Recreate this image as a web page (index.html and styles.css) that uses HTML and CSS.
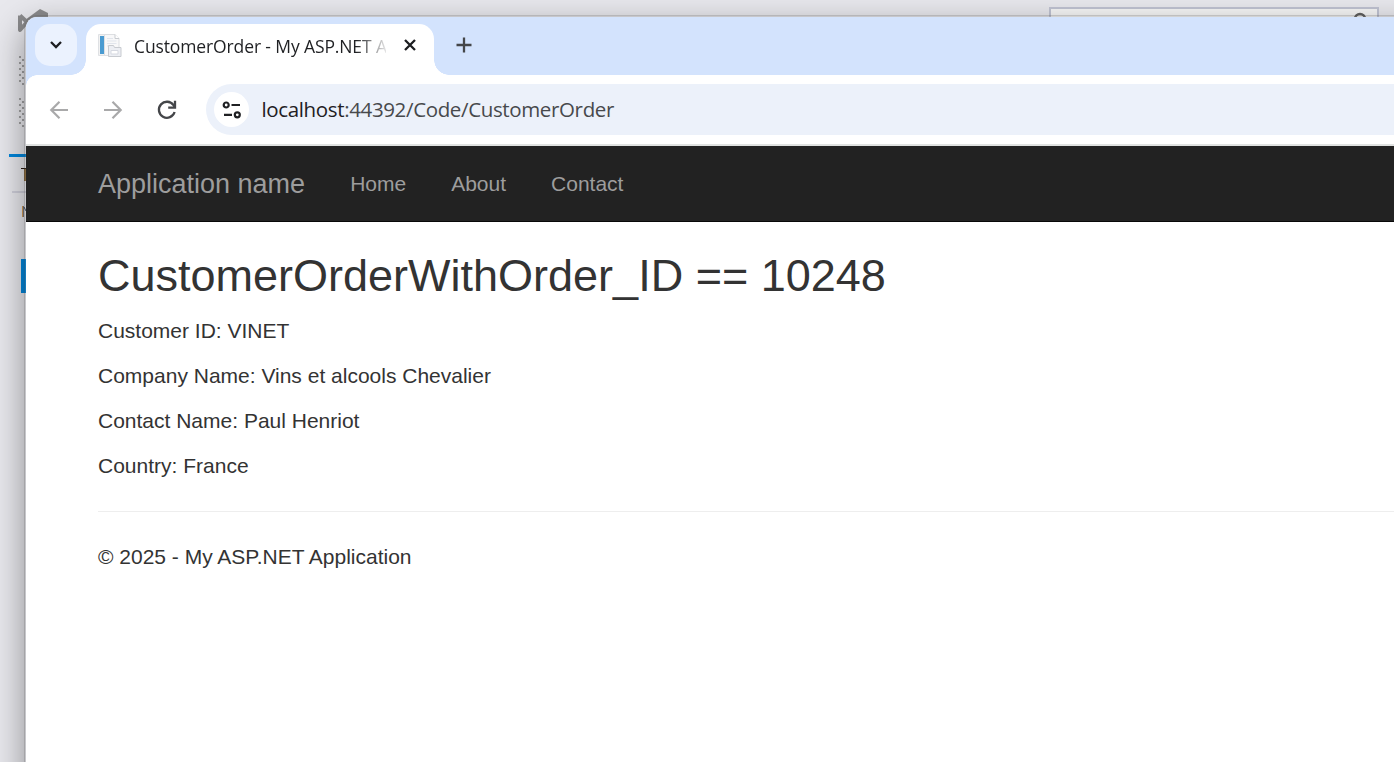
FILE: index.html
```html
<!DOCTYPE html>
<html lang="en">
<head>
<meta charset="utf-8">
<title>CustomerOrder - My ASP.NET Application</title>
<link rel="stylesheet" href="styles.css">
</head>
<body>
<div class="desktop">
  <svg class="backdrop" width="1394" height="762" viewBox="0 0 1394 762" aria-hidden="true">
    <defs>
      <pattern id="grip" x="19" y="56" width="6" height="6" patternUnits="userSpaceOnUse">
        <rect x="0" y="0" width="2" height="2" fill="#a0a0a2"/>
        <rect x="3" y="3" width="2" height="2" fill="#a0a0a2"/>
      </pattern>
    </defs>
    <path d="M20 15.500L27 22L20 30V15.500" fill="none" stroke="#8b8b8d" stroke-width="4" stroke-linejoin="round"/>
    <path d="M25 20L40 9L48 13V20Z" fill="#8b8b8d"/>
    <rect x="19" y="56" width="6" height="29" fill="url(#grip)"/>
    <rect x="19" y="98" width="6" height="29" fill="url(#grip)"/>
    <rect x="9" y="154" width="17" height="3" fill="#0086dc"/>
    <rect x="21" y="168" width="5" height="1" fill="#2a1c12"/>
    <rect x="24" y="169" width="2" height="12" fill="#8a6838"/>
    <rect x="12" y="191" width="14" height="2" fill="#cfcfda"/>
    <rect x="22" y="206" width="1" height="11" fill="#d19c58"/>
    <rect x="23" y="206" width="1" height="11" fill="#77777d"/>
    <path d="M24 207L26 211" stroke="#33455c"/>
    <rect x="21" y="259" width="5" height="34" fill="#0086dc"/>
    <rect x="1050" y="8" width="328" height="20" fill="#f6f6f6" stroke="#c0c3d2" stroke-width="2"/>
    <circle cx="1360" cy="19" r="5" fill="none" stroke="#606060" stroke-width="2.500"/>
  </svg>
  <main class="window">
    <header class="tabs">
      <button class="tab-search" aria-label="Search tabs"><svg width="14" height="10" viewBox="0 0 14 10"><path d="M2 2L7 7L12 2" fill="none" stroke="#1c1d20" stroke-width="2.300"/></svg></button>
      <div class="tab">
        <svg class="favicon" width="26" height="26" viewBox="0 0 26 26">
          <path d="M1.500 2.500H8V23.500H1.500Z" fill="#f2f2f2" stroke="#dfe1e4"/>
          <rect x="3" y="4" width="4" height="18" fill="#4a9bd1"/>
          <path d="M7.500 2.500H18L22 6.500V23.500H7.500Z" fill="#f8f8f9" stroke="#dddfe2"/>
          <path d="M18 2.500V6.500H22" fill="#fff" stroke="#c9ccd0"/>
          <path d="M10 6.500H16M10 9H19.500M10 11.500H19.500M10 14H12" stroke="#e1e5ec"/>
          <path d="M11.500 13.500H16.500L17.500 15.500H24V24.500H11.500Z" fill="#eceef3" stroke="#c8cbd0"/>
          <path d="M14 18.500H21V22H14Z" fill="#fff" stroke="#d6d9e1"/>
        </svg>
        <span class="tab-title">CustomerOrder - My ASP.NET A</span>
        <svg class="close" width="14" height="14" viewBox="0 0 14 14"><path d="M2 2L12 12M12 2L2 12" stroke="#1c1d20" stroke-width="2.300"/></svg>
      </div>
      <svg class="new-tab" width="16" height="16" viewBox="0 0 16 16"><path d="M8 .5V15.500M.5 8H15.500" stroke="#444649" stroke-width="2.300"/></svg>
    </header>
    <div class="toolbar">
      <svg class="back" width="20" height="20" viewBox="0 0 20 20"><path d="M19 10H2.500M10.500 1.800L2.300 10L10.500 18.200" fill="none" stroke="#a9a9aa" stroke-width="2.200"/></svg>
      <svg class="forward" width="20" height="20" viewBox="0 0 20 20"><path d="M1 10H17.500M9.500 1.800L17.700 10L9.500 18.200" fill="none" stroke="#a9a9aa" stroke-width="2.200"/></svg>
      <svg class="reload" width="20" height="20" viewBox="0 0 20 20"><path d="M17.600 12A8 8 0 1 1 16.500 5.200L17.500 6.800" fill="none" stroke="#444649" stroke-width="2.300"/><path d="M18 .8V7.600H11.200" fill="none" stroke="#444649" stroke-width="2.300"/></svg>
      <div class="address">
        <span class="site-info"><svg width="20" height="18" viewBox="0 0 20 18" fill="none" stroke="#1f2023" stroke-width="2.200"><circle cx="4.200" cy="4" r="2.500"/><path d="M9.500 4H18M2 13.800H10"/><circle cx="15.300" cy="13.800" r="2.500"/></svg></span>
        <span class="url"><span class="host">localhost</span>:44392/Code/CustomerOrder</span>
      </div>
    </div>
    <nav class="navbar">
      <a class="brand">Application name</a>
      <a class="nav-link">Home</a>
      <a class="nav-link">About</a>
      <a class="nav-link">Contact</a>
    </nav>
    <section class="content">
      <h2>CustomerOrderWithOrder_ID == 10248</h2>
      <p>Customer ID: VINET</p>
      <p>Company Name: Vins et alcools Chevalier</p>
      <p>Contact Name: Paul Henriot</p>
      <p>Country: France</p>
      <hr>
      <footer><p>© 2025 - My ASP.NET Application</p></footer>
    </section>
  </main>
</div>
</body>
</html>
```
FILE: styles.css
```css
* { box-sizing: border-box; }
body { margin: 0; overflow: hidden; }
.desktop {
  position: relative;
  width: 1394px;
  height: 762px;
  overflow: hidden;
  padding: 15px 0 0 24px;
  background: #e8e8ed;
}
.backdrop { position: absolute; left: 0; top: 0; }
.window {
  position: relative;
  width: 1500px;
  height: 900px;
  border: 2px solid rgba(80, 80, 82, .22);
  border-radius: 13px 0 0 0;
  background: #fff;
  background-clip: padding-box;
  box-shadow: 0 12px 34px rgba(0, 0, 0, .38);
  overflow: hidden;
}
.tabs {
  display: flex;
  height: 58px;
  padding: 7px 0 0 9px;
  background: #d3e3fd;
}
.tab-search {
  display: flex;
  align-items: center;
  justify-content: center;
  width: 42px;
  height: 42px;
  padding: 0;
  border: 0;
  border-radius: 15px;
  background: #ebf2fe;
}
.tab {
  position: relative;
  display: flex;
  width: 348px;
  height: 51px;
  margin-left: 9px;
  padding: 8px 0 0 11px;
  border-radius: 15px 15px 0 0;
  background: #fff;
}
.tab::before, .tab::after {
  content: "";
  position: absolute;
  bottom: 0;
  width: 15px;
  height: 15px;
}
.tab::before { left: -15px; background: radial-gradient(circle at 0 0, transparent 14.500px, #fff 15px); }
.tab::after { right: -15px; background: radial-gradient(circle at 100% 0, transparent 14.500px, #fff 15px); }
.tab-title {
  width: 252px;
  margin-left: 11px;
  white-space: nowrap;
  font: 17.500px/29px "Open Sans", "Noto Sans", sans-serif;
  letter-spacing: -.12px;
  color: #1f2023;
  -webkit-mask-image: linear-gradient(to right, #000 222px, transparent 256px);
  mask-image: linear-gradient(to right, #000 222px, transparent 256px);
}
.close { margin: 6px 0 0 17px; }
.new-tab { margin: 13px 0 0 22px; }
.toolbar {
  position: relative;
  display: flex;
  align-items: center;
  height: 71px;
  padding: 0 0 0 23px;
  border-bottom: 2px solid #e0e2e1;
  background: #fff;
}
.toolbar::before {
  content: "";
  position: absolute;
  left: 0;
  top: 0;
  width: 11px;
  height: 11px;
  background: radial-gradient(circle at 100% 100%, #fff 10.500px, #d3e3fd 11px);
}
.forward { margin-left: 34px; }
.reload { margin-left: 34px; }
.address {
  display: flex;
  align-items: center;
  flex: 1;
  height: 51px;
  margin-left: 29px;
  padding-left: 8px;
  border-radius: 26px 0 0 26px;
  background: #ecf1fa;
}
.site-info {
  display: flex;
  align-items: center;
  justify-content: center;
  width: 35px;
  height: 35px;
  border-radius: 50%;
  background: #fff;
}
.url {
  margin-left: 12.500px;
  padding-bottom: 2px;
  font: 20.500px/30px "Open Sans", "Noto Sans", sans-serif;
  letter-spacing: -.36px;
  color: #47494c;
}
.host { color: #1f2023; }
.navbar {
  display: flex;
  align-items: center;
  height: 76px;
  padding-left: 72px;
  border-bottom: 1px solid #080808;
  background: #222;
  font: 21px/30px "Liberation Sans", Arial, sans-serif;
  color: #9d9d9d;
}
.brand { margin-right: 22.500px; font-size: 27px; }
.nav-link { padding: 0 22.500px; }
.content {
  padding: 29px 0 0 72px;
  font: 21px/30px "Liberation Sans", Arial, sans-serif;
  color: #333;
}
.content h2 { margin: 0 0 15px; font-size: 45px; font-weight: 400; line-height: 49.500px; }
.content p { margin: 0 0 15px; }
.content hr { height: 1px; margin: 30px 0; border: 0; background: #eee; }
```
